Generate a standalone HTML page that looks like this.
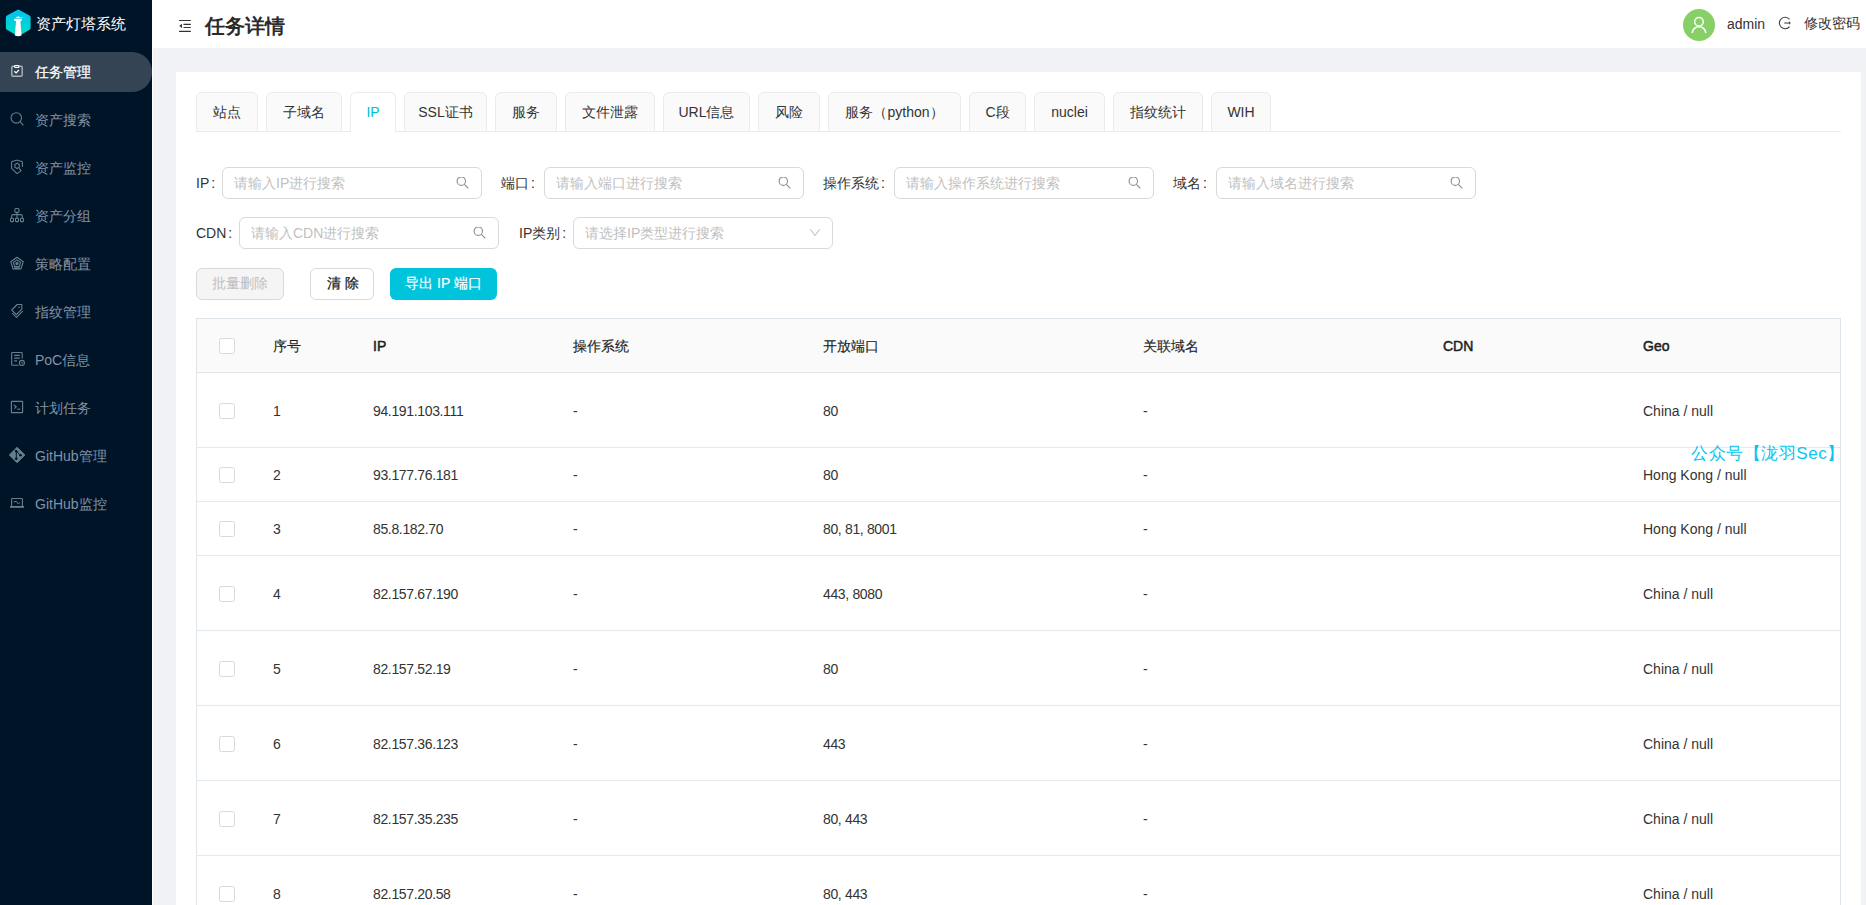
<!DOCTYPE html>
<html><head><meta charset="utf-8">
<style>
*{box-sizing:border-box;margin:0;padding:0}
html,body{width:1866px;height:905px;overflow:hidden;background:#f0f2f5;font-family:"Liberation Sans",sans-serif;font-size:14px;color:#333}
.abs{position:absolute}
#side{position:absolute;left:0;top:0;width:152px;height:905px;background:#001428}
#sline{position:absolute;left:152px;top:48px;width:1px;height:857px;background:#fff}
.logo-t{position:absolute;left:36px;top:14px;font-size:15px;line-height:20px;color:#fff;font-weight:normal;white-space:nowrap}
.mi{position:absolute;left:0;width:152px;height:40px;line-height:40px;color:#8193a5;font-size:14px;white-space:nowrap}
.mi .tx{position:absolute;left:35px;top:0}
.mi svg.ic{position:absolute;left:0;top:0}
.mi.act{background:#344454;border-radius:0 20px 20px 0;color:#fff;font-weight:normal;-webkit-text-stroke:0.25px #fff}
#hdr{position:absolute;left:152px;top:0;width:1714px;height:48px;background:#fff}
#card{position:absolute;left:176px;top:72px;width:1685px;height:900px;background:#fff}
.tab{position:absolute;top:92px;height:40px;background:#fafafa;border:1px solid #ebebeb;border-radius:6px 6px 0 0;text-align:center;line-height:38px;color:#333;font-size:14px;white-space:nowrap}
.tab.act{background:#fff;border-bottom-color:#fff;color:#00bcd4}
#tabline{position:absolute;left:196px;top:131px;width:1645px;height:1px;background:#ebebeb}
.lbl{position:absolute;height:32px;line-height:32px;color:#333;white-space:nowrap}
.inp{position:absolute;height:32px;width:260px;border:1px solid #d9d9d9;border-radius:6px;background:#fff}
.inp .ph{position:absolute;left:11px;top:0;line-height:30px;color:#bfbfbf;white-space:nowrap}
.inp svg{position:absolute;right:12px;top:9px}
.btn{position:absolute;top:268px;height:32px;border-radius:6px;text-align:center;line-height:30px;white-space:nowrap;font-size:14px}
#tbl{position:absolute;left:196px;top:318px;width:1645px;height:620px;border:1px solid #dfe6eb;border-bottom:none}
.row{position:absolute;left:197px;width:1643px;border-bottom:1px solid #e6e8ea}
.cell{position:absolute;white-space:nowrap;color:#333}
.cb{position:absolute;left:219px;width:16px;height:16px;border:1px solid #d9d9d9;border-radius:2.5px;background:#fff}
.th{font-weight:normal;color:#1f1f1f;-webkit-text-stroke:0.15px #1f1f1f}
.th.lat{font-weight:normal;-webkit-text-stroke:0.5px #1f1f1f}
.td{letter-spacing:-0.35px}
.wm{font-size:17px;line-height:22px;color:#06c6f0;white-space:nowrap;font-weight:300;letter-spacing:0.55px}
</style></head><body>

<div id="side">
  <svg class="abs" style="left:0;top:0" width="40" height="48">
    <defs><linearGradient id="lg" x1="0" y1="9" x2="0" y2="36" gradientUnits="userSpaceOnUse"><stop offset="0" stop-color="#00c3f2"/><stop offset="1" stop-color="#00dcc4"/></linearGradient></defs>
    <path d="M18.25 11.8 L28.4 17.5 V27.9 L18.25 33.8 L8.1 27.9 V17.5Z" fill="url(#lg)" stroke="url(#lg)" stroke-width="4.4" stroke-linejoin="round"/>
    <path d="M16.1 20.8 H20.4 L21.5 35.6 Q18.25 37 14.8 35.6Z" fill="#fff"/>
    <path d="M14 18.8 H21.9 L21.5 20.9 H14.4Z" fill="#fff"/>
    <rect x="16.1" y="16.9" width="3.8" height="1.2" fill="#fff"/>
    <path d="M17.5 16.95 L18.25 15.9 L19 16.95Z" fill="#fff"/>
    <rect x="19.6" y="17.1" width="3.3" height="0.7" fill="#9feaff"/>
  </svg>
  <div class="logo-t">资产灯塔系统</div>

  <div class="mi act" style="top:52px"><svg class="ic" width="30" height="40" fill="none" stroke-width="1.25"><rect x="11.8" y="14.3" width="10.4" height="10" rx="1.2" stroke="#a9b3bd" stroke-width="1.4"/><rect x="14.5" y="13.6" width="4.5" height="1.9" rx="0.95" fill="#344454" stroke="#fff" stroke-width="1.1"/><path d="M14.4 19.3 L16.1 20.9 L19 17.9" stroke="#fff" stroke-width="1.3"/></svg><span class="tx">任务管理</span></div>
  <div class="mi" style="top:100px"><svg class="ic" width="30" height="40" fill="none" stroke="#64808f" stroke-width="1.1"><circle cx="16.3" cy="17.9" r="5.2"/><path d="M20 21.7 L23.4 25.4"/></svg><span class="tx">资产搜索</span></div>
  <div class="mi" style="top:148px"><svg class="ic" width="30" height="40" fill="none" stroke="#64808f" stroke-width="1.1"><path d="M22.4 19 V14.2 Q22.4 13.7 21.9 13.5 L17.4 12.2 Q17 12.1 16.6 12.2 L12.1 13.5 Q11.6 13.7 11.6 14.2 V20.3 L17 25.6 L21.4 22.6"/><path d="M17.1 15.2 L19.3 16.5 V19.2 L17.1 20.5 L14.9 19.2 V16.5Z"/><path d="M19 20.4 L21.2 22.5"/></svg><span class="tx">资产监控</span></div>
  <div class="mi" style="top:196px"><svg class="ic" width="30" height="40" fill="none" stroke="#64808f" stroke-width="1.1"><rect x="14.8" y="12.5" width="4.2" height="3.9" rx="1.2"/><path d="M17 16.4 V22.2 M11.7 22 V20 Q11.7 18.6 13.1 18.6 H20.9 Q22.3 18.6 22.3 20 V22"/><rect x="10.5" y="22.3" width="3" height="3.3" rx="0.6"/><rect x="15.5" y="22.3" width="3" height="3.3" rx="0.6"/><rect x="20.5" y="22.3" width="3" height="3.3" rx="0.6"/></svg><span class="tx">资产分组</span></div>
  <div class="mi" style="top:244px"><svg class="ic" width="30" height="40" fill="none" stroke="#64808f" stroke-width="1.1"><path d="M17 13.2 L23.3 17.7 L20.9 25 H13.1 L10.7 17.7Z" stroke-linejoin="round"/><path d="M17 15.9 L20.6 18.5 L19.3 22.6 H14.7 L13.4 18.5Z"/><circle cx="17" cy="19.6" r="1.1" fill="#64808f"/><path d="M14.3 24.2 H19.7" stroke-width="1.6"/></svg><span class="tx">策略配置</span></div>
  <div class="mi" style="top:292px"><svg class="ic" width="30" height="40" fill="none" stroke="#64808f" stroke-width="1.1" stroke-linejoin="round"><path d="M11.7 18 L17.2 12.5 H21.8 V17.1 L16.4 22.7Z"/><path d="M12.3 21.2 L16.5 25.4 L22.7 19.2"/><path d="M18.5 15.4 H19.8" stroke-width="1.3"/></svg><span class="tx">指纹管理</span></div>
  <div class="mi" style="top:340px"><svg class="ic" width="30" height="40" fill="none" stroke="#64808f" stroke-width="1.1"><path d="M22.2 18.4 V13.3 Q22.2 12.55 21.4 12.55 H12.4 Q11.65 12.55 11.65 13.3 V24.5 Q11.65 25.2 12.4 25.2 H18.6"/><path d="M14.2 15.4 H19.8 M14.2 18.1 H19.8 M14.2 20.9 H17" stroke-width="1.2"/><circle cx="21.9" cy="22.9" r="2.5"/><path d="M21.8 21.8 V23.1 H22.9" stroke-width="0.9"/></svg><span class="tx">PoC信息</span></div>
  <div class="mi" style="top:388px"><svg class="ic" width="30" height="40" fill="none" stroke="#64808f" stroke-width="1.15"><rect x="11.4" y="13.4" width="11.2" height="11.2" rx="0.4"/><path d="M13.9 16.9 L16.2 18.8 L14.3 20.6"/><path d="M17.3 21.2 H20.2"/></svg><span class="tx">计划任务</span></div>
  <div class="mi" style="top:436px"><svg class="ic" width="30" height="40"><path d="M17.1 11.2 L24.9 19 L17.1 26.8 L9.3 19Z" fill="#64808f" stroke="#64808f" stroke-width="0.9" stroke-linejoin="round"/><path d="M15 13.7 L20.5 19.3 M16.3 15.2 V22.7" stroke="#001428" stroke-width="1"/><circle cx="16.3" cy="15.2" r="1.3" fill="#001428"/><circle cx="16.3" cy="22.7" r="1.3" fill="#001428"/><circle cx="20.5" cy="19.3" r="1.3" fill="#001428"/></svg><span class="tx">GitHub管理</span></div>
  <div class="mi" style="top:484px"><svg class="ic" width="30" height="40" fill="none" stroke="#64808f" stroke-width="1.1"><path d="M11.6 22 V15.2 Q11.6 14.5 12.3 14.5 H21.7 Q22.4 14.5 22.4 15.2 V22"/><path d="M10 22.9 H24" stroke-width="1.8"/><path d="M13.6 18 L16.3 17.3 L18.3 20 L19.8 18.3" stroke-width="1"/></svg><span class="tx">GitHub监控</span></div>
</div>
<div id="sline"></div>

<div id="hdr">
  <svg class="abs" style="left:26px;top:19px" width="14" height="14" viewBox="0 0 14 14"><path d="M1.5 1.55 H12.4 M5.9 5.4 H12.4 M5.9 8.5 H12.4 M1.5 12.4 H12.4" stroke="#333" stroke-width="1.1" stroke-linecap="round"/><path d="M4 4.8 L1.2 6.95 L4 9.1Z" fill="#333"/></svg>
  <div class="abs" style="left:53px;top:13px;font-size:20px;line-height:26px;font-weight:bold;color:#2b2b2b">任务详情</div>
  <div class="abs" style="left:1531px;top:9px;width:32px;height:32px;border-radius:50%;background:#87d068"></div>
  <svg class="abs" style="left:1531px;top:9px" width="32" height="32" viewBox="0 0 32 32" fill="none" stroke="#fff" stroke-width="1.5"><circle cx="16" cy="12.8" r="4.3"/><path d="M9.2 24 Q10.2 17.8 16 17.8 Q21.8 17.8 22.8 24"/></svg>
  <div class="abs" style="left:1575px;top:14px;line-height:20px;color:#333">admin</div>
  <svg class="abs" style="left:1626px;top:16px" width="14" height="14" viewBox="0 0 14 14" fill="none" stroke="#444" stroke-width="1.1"><path d="M11.5 3.4 A5.7 5.7 0 1 0 11.5 10.6"/><path d="M6.3 7 H11.4"/><path d="M11 5.3 L12.8 7 L11 8.7Z" fill="#444" stroke="none"/></svg>
  <div class="abs" style="left:1652px;top:13px;line-height:20px;color:#333">修改密码</div>
</div>

<div id="card"></div>

<!-- tabs -->
<div class="tab" style="left:196px;width:62px">站点</div>
<div class="tab" style="left:266px;width:76px">子域名</div>
<div class="tab act" style="left:350px;width:46px">IP</div>
<div class="tab" style="left:404px;width:83px">SSL证书</div>
<div class="tab" style="left:495px;width:62px">服务</div>
<div class="tab" style="left:565px;width:90px">文件泄露</div>
<div class="tab" style="left:663px;width:87px">URL信息</div>
<div class="tab" style="left:758px;width:62px">风险</div>
<div class="tab" style="left:828px;width:133px">服务（python）</div>
<div class="tab" style="left:969px;width:57px">C段</div>
<div class="tab" style="left:1034px;width:71px">nuclei</div>
<div class="tab" style="left:1113px;width:90px">指纹统计</div>
<div class="tab" style="left:1211px;width:60px">WIH</div>
<div id="tabline"></div>
<div class="abs" style="left:351px;top:131px;width:44px;height:1px;background:#fff"></div>

<!-- form -->
<div class="lbl" style="left:196px;top:167px">IP<span style="margin-left:2px">:</span></div>
<div class="inp" style="left:222px;top:167px"><span class="ph">请输入IP进行搜索</span><svg width="13" height="13" viewBox="0 0 13 13" fill="none" stroke="#8c8c8c" stroke-width="1.1"><circle cx="5.3" cy="4.2" r="4.2"/><path d="M8.3 7.3 L12.3 11.3"/></svg></div>
<div class="lbl" style="left:501px;top:167px">端口<span style="margin-left:2px">:</span></div>
<div class="inp" style="left:544px;top:167px"><span class="ph">请输入端口进行搜索</span><svg width="13" height="13" viewBox="0 0 13 13" fill="none" stroke="#8c8c8c" stroke-width="1.1"><circle cx="5.3" cy="4.2" r="4.2"/><path d="M8.3 7.3 L12.3 11.3"/></svg></div>
<div class="lbl" style="left:823px;top:167px">操作系统<span style="margin-left:2px">:</span></div>
<div class="inp" style="left:894px;top:167px"><span class="ph">请输入操作系统进行搜索</span><svg width="13" height="13" viewBox="0 0 13 13" fill="none" stroke="#8c8c8c" stroke-width="1.1"><circle cx="5.3" cy="4.2" r="4.2"/><path d="M8.3 7.3 L12.3 11.3"/></svg></div>
<div class="lbl" style="left:1173px;top:167px">域名<span style="margin-left:2px">:</span></div>
<div class="inp" style="left:1216px;top:167px"><span class="ph">请输入域名进行搜索</span><svg width="13" height="13" viewBox="0 0 13 13" fill="none" stroke="#8c8c8c" stroke-width="1.1"><circle cx="5.3" cy="4.2" r="4.2"/><path d="M8.3 7.3 L12.3 11.3"/></svg></div>

<div class="lbl" style="left:196px;top:217px">CDN<span style="margin-left:2px">:</span></div>
<div class="inp" style="left:239px;top:217px"><span class="ph">请输入CDN进行搜索</span><svg width="13" height="13" viewBox="0 0 13 13" fill="none" stroke="#8c8c8c" stroke-width="1.1"><circle cx="5.3" cy="4.2" r="4.2"/><path d="M8.3 7.3 L12.3 11.3"/></svg></div>
<div class="lbl" style="left:519px;top:217px">IP类别<span style="margin-left:2px">:</span></div>
<div class="inp" style="left:573px;top:217px"><span class="ph">请选择IP类型进行搜索</span><svg width="12" height="12" viewBox="0 0 12 12" fill="none" stroke="#b5b5b5" stroke-width="1" style="top:10px"><path d="M2.4 1.4 L7.05 7.5 L11.6 1.4"/></svg></div>

<div class="btn" style="left:196px;width:88px;background:#f5f5f5;border:1px solid #d9d9d9;color:#bfbfbf;line-height:28px">批量删除</div>
<div class="btn" style="left:310px;width:64px;background:#fff;border:1px solid #d9d9d9;color:#1a1a1a;line-height:28px;-webkit-text-stroke:0.25px #1a1a1a;padding-left:2px">清<span style="margin-left:4px">除</span></div>
<div class="btn" style="left:390px;width:107px;background:#00c4dc;color:#fff;line-height:30px;-webkit-text-stroke:0.2px #fff">导出 IP 端口</div>

<!-- table -->
<div id="tbl"></div>
<div class="abs" style="left:197px;top:319px;width:1643px;height:54px;background:#fafafa;border-bottom:1px solid #e6e6e6"></div>
<!--ROWS-->
<div class="cb" style="top:338px"></div>
<div class="cell th" style="left:273px;top:336px;line-height:20px">序号</div>
<div class="cell th lat" style="left:373px;top:336px;line-height:20px">IP</div>
<div class="cell th" style="left:573px;top:336px;line-height:20px">操作系统</div>
<div class="cell th" style="left:823px;top:336px;line-height:20px">开放端口</div>
<div class="cell th" style="left:1143px;top:336px;line-height:20px">关联域名</div>
<div class="cell th lat" style="left:1443px;top:336px;line-height:20px">CDN</div>
<div class="cell th lat" style="left:1643px;top:336px;line-height:20px">Geo</div>
<div class="row" style="top:373px;height:75px"></div>
<div class="cb" style="top:403px"></div>
<div class="cell" style="left:273px;top:401px;line-height:20px">1</div>
<div class="cell td" style="left:373px;top:401px;line-height:20px">94.191.103.111</div>
<div class="cell" style="left:573px;top:401px;line-height:20px">-</div>
<div class="cell td" style="left:823px;top:401px;line-height:20px">80</div>
<div class="cell" style="left:1143px;top:401px;line-height:20px">-</div>
<div class="cell" style="left:1643px;top:401px;line-height:20px">China / null</div>
<div class="row" style="top:448px;height:54px"></div>
<div class="cb" style="top:467px"></div>
<div class="cell" style="left:273px;top:465px;line-height:20px">2</div>
<div class="cell td" style="left:373px;top:465px;line-height:20px">93.177.76.181</div>
<div class="cell" style="left:573px;top:465px;line-height:20px">-</div>
<div class="cell td" style="left:823px;top:465px;line-height:20px">80</div>
<div class="cell" style="left:1143px;top:465px;line-height:20px">-</div>
<div class="cell" style="left:1643px;top:465px;line-height:20px">Hong Kong / null</div>
<div class="row" style="top:502px;height:54px"></div>
<div class="cb" style="top:521px"></div>
<div class="cell" style="left:273px;top:519px;line-height:20px">3</div>
<div class="cell td" style="left:373px;top:519px;line-height:20px">85.8.182.70</div>
<div class="cell" style="left:573px;top:519px;line-height:20px">-</div>
<div class="cell td" style="left:823px;top:519px;line-height:20px">80, 81, 8001</div>
<div class="cell" style="left:1143px;top:519px;line-height:20px">-</div>
<div class="cell" style="left:1643px;top:519px;line-height:20px">Hong Kong / null</div>
<div class="row" style="top:556px;height:75px"></div>
<div class="cb" style="top:586px"></div>
<div class="cell" style="left:273px;top:584px;line-height:20px">4</div>
<div class="cell td" style="left:373px;top:584px;line-height:20px">82.157.67.190</div>
<div class="cell" style="left:573px;top:584px;line-height:20px">-</div>
<div class="cell td" style="left:823px;top:584px;line-height:20px">443, 8080</div>
<div class="cell" style="left:1143px;top:584px;line-height:20px">-</div>
<div class="cell" style="left:1643px;top:584px;line-height:20px">China / null</div>
<div class="row" style="top:631px;height:75px"></div>
<div class="cb" style="top:661px"></div>
<div class="cell" style="left:273px;top:659px;line-height:20px">5</div>
<div class="cell td" style="left:373px;top:659px;line-height:20px">82.157.52.19</div>
<div class="cell" style="left:573px;top:659px;line-height:20px">-</div>
<div class="cell td" style="left:823px;top:659px;line-height:20px">80</div>
<div class="cell" style="left:1143px;top:659px;line-height:20px">-</div>
<div class="cell" style="left:1643px;top:659px;line-height:20px">China / null</div>
<div class="row" style="top:706px;height:75px"></div>
<div class="cb" style="top:736px"></div>
<div class="cell" style="left:273px;top:734px;line-height:20px">6</div>
<div class="cell td" style="left:373px;top:734px;line-height:20px">82.157.36.123</div>
<div class="cell" style="left:573px;top:734px;line-height:20px">-</div>
<div class="cell td" style="left:823px;top:734px;line-height:20px">443</div>
<div class="cell" style="left:1143px;top:734px;line-height:20px">-</div>
<div class="cell" style="left:1643px;top:734px;line-height:20px">China / null</div>
<div class="row" style="top:781px;height:75px"></div>
<div class="cb" style="top:811px"></div>
<div class="cell" style="left:273px;top:809px;line-height:20px">7</div>
<div class="cell td" style="left:373px;top:809px;line-height:20px">82.157.35.235</div>
<div class="cell" style="left:573px;top:809px;line-height:20px">-</div>
<div class="cell td" style="left:823px;top:809px;line-height:20px">80, 443</div>
<div class="cell" style="left:1143px;top:809px;line-height:20px">-</div>
<div class="cell" style="left:1643px;top:809px;line-height:20px">China / null</div>
<div class="row" style="top:856px;height:75px"></div>
<div class="cb" style="top:886px"></div>
<div class="cell" style="left:273px;top:884px;line-height:20px">8</div>
<div class="cell td" style="left:373px;top:884px;line-height:20px">82.157.20.58</div>
<div class="cell" style="left:573px;top:884px;line-height:20px">-</div>
<div class="cell td" style="left:823px;top:884px;line-height:20px">80, 443</div>
<div class="cell" style="left:1143px;top:884px;line-height:20px">-</div>
<div class="cell" style="left:1643px;top:884px;line-height:20px">China / null</div>
<div class="abs wm" style="left:1691px;top:443px">公众号【泷羽Sec】</div>
<!--/ROWS-->
</body></html>
